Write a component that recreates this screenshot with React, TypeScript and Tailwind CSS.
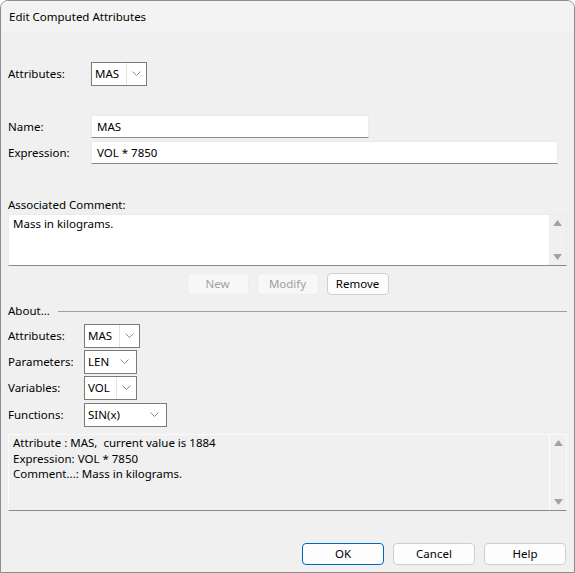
import { ReactNode } from 'react'

const font = { fontFamily: '"Noto Sans", "Open Sans", sans-serif' }

function Chevron() {
  return (
    <svg width="9" height="6" viewBox="0 0 9 6" className="shrink-0">
      <path d="M0.5 0.5 L4.5 4.5 L8.5 0.5" fill="none" stroke="#8a8a8a" strokeWidth="1" />
    </svg>
  )
}

function Combo({ value, width, split }: { value: string; width: string; split?: boolean }) {
  return (
    <div className={`${width} h-[24px] flex items-center border border-[#7a7a7a] bg-white`}>
      <span className="flex-1 pl-[3px] leading-none">{value}</span>
      {split ? (
        <div className="h-full flex items-center border-l border-[#e3e3e3] px-[5px]">
          <Chevron />
        </div>
      ) : (
        <div className="pr-[7px] flex items-center">
          <Chevron />
        </div>
      )}
    </div>
  )
}

function ScrollBar({ light }: { light?: boolean }) {
  return (
    <div className={`w-[17px] h-full flex flex-col items-center justify-between py-[5px] ${light ? 'border-l border-white' : 'bg-[#f0f0f0]'}`}>
      <svg width="9" height="6" viewBox="0 0 9 6">
        <path d="M0 6 L4.5 0 L9 6 Z" fill="#a3a3a3" />
      </svg>
      <svg width="9" height="6" viewBox="0 0 9 6">
        <path d="M0 0 L4.5 6 L9 0 Z" fill="#a3a3a3" />
      </svg>
    </div>
  )
}

function Button({ children, disabled, primary, width }: { children: ReactNode; disabled?: boolean; primary?: boolean; width: string }) {
  const cls = disabled
    ? 'bg-[#f7f7f7] border-[#ececec] text-[#a0a0a0]'
    : primary
      ? 'bg-[#fdfdfd] border-[#0067c0] text-black'
      : 'bg-[#fdfdfd] border-[#cfcfcf] text-black'
  return (
    <div className={`${width} h-[22px] flex items-center justify-center rounded-[4px] border ${cls}`}>
      {children}
    </div>
  )
}

function Row({ label, labelWidth, children, className }: { label: string; labelWidth: string; children: ReactNode; className?: string }) {
  return (
    <div className={`flex items-center ${className ?? ''}`}>
      <span className={`${labelWidth} shrink-0`}>{label}</span>
      {children}
    </div>
  )
}

export default function App() {
  return (
    <div
      className="w-[575px] h-[573px] flex flex-col overflow-hidden rounded-t-[8px] border border-[#8c8c8c] bg-[#f0f0f0] text-[11.5px] text-black"
      style={font}
    >
      {/* title bar */}
      <div className="h-[31px] shrink-0 flex items-center pl-[8px] bg-[#f3f3f3]">
        Edit Computed Attributes
      </div>

      <div className="flex-1 flex flex-col px-[7px]">
        <Row label="Attributes:" labelWidth="w-[83px]" className="mt-[30px]">
          <Combo value="MAS" width="w-[56px]" split />
        </Row>

        <Row label="Name:" labelWidth="w-[83px]" className="mt-[29px]">
          <div className="w-[278px] h-[23px] flex items-center pl-[5px] bg-white border border-[#ebebeb] border-b-[#8a8a8a]">MAS</div>
        </Row>
        <Row label="Expression:" labelWidth="w-[83px]" className="mt-[3px]">
          <div className="w-[467px] h-[23px] flex items-center pl-[5px] bg-white border border-[#ebebeb] border-b-[#8a8a8a]">VOL * 7850</div>
        </Row>

        <div className="mt-[32px] h-[17px] leading-[17px]">Associated Comment:</div>
        <div className="mt-[1px] h-[52px] flex bg-white border border-[#ebebeb] border-b-[#8a8a8a]">
          <div className="flex-1 pl-[4px] leading-[17px]">Mass in kilograms.</div>
          <ScrollBar />
        </div>

        <div className="mt-[7px] flex justify-center gap-[8px]">
          <Button width="w-[62px]" disabled>New</Button>
          <Button width="w-[62px]" disabled>Modify</Button>
          <Button width="w-[62px]">Remove</Button>
        </div>

        <div className="mt-[8px] h-[16px] flex items-center">
          <span className="leading-none">About...</span>
          <div className="flex-1 ml-[8px] h-px bg-[#a0a0a0]" />
        </div>

        <div className="mt-[5px] flex flex-col gap-[2px]">
          <Row label="Attributes:" labelWidth="w-[76px]">
            <Combo value="MAS" width="w-[56px]" split />
          </Row>
          <Row label="Parameters:" labelWidth="w-[76px]">
            <Combo value="LEN" width="w-[53px]" />
          </Row>
          <Row label="Variables:" labelWidth="w-[76px]">
            <Combo value="VOL" width="w-[53px]" split />
          </Row>
          <Row label="Functions:" labelWidth="w-[76px]" className="mt-[1px]">
            <Combo value="SIN(x)" width="w-[83px]" />
          </Row>
        </div>

        <div className="mt-[7px] h-[77px] flex bg-[#f0f0f0] border border-[#fafafa] border-b-[#8a8a8a]">
          <div className="flex-1 pl-[4px] leading-[15.5px]">
            <div>Attribute : MAS,&nbsp; current value is 1884</div>
            <div>Expression: VOL * 7850</div>
            <div>Comment...: Mass in kilograms.</div>
          </div>
          <ScrollBar light />
        </div>

        <div className="mt-auto mb-[7px] flex justify-end gap-[9px] pr-[1px]">
          <Button width="w-[82px]" primary>OK</Button>
          <Button width="w-[82px]">Cancel</Button>
          <Button width="w-[82px]">Help</Button>
        </div>
      </div>
    </div>
  )
}
